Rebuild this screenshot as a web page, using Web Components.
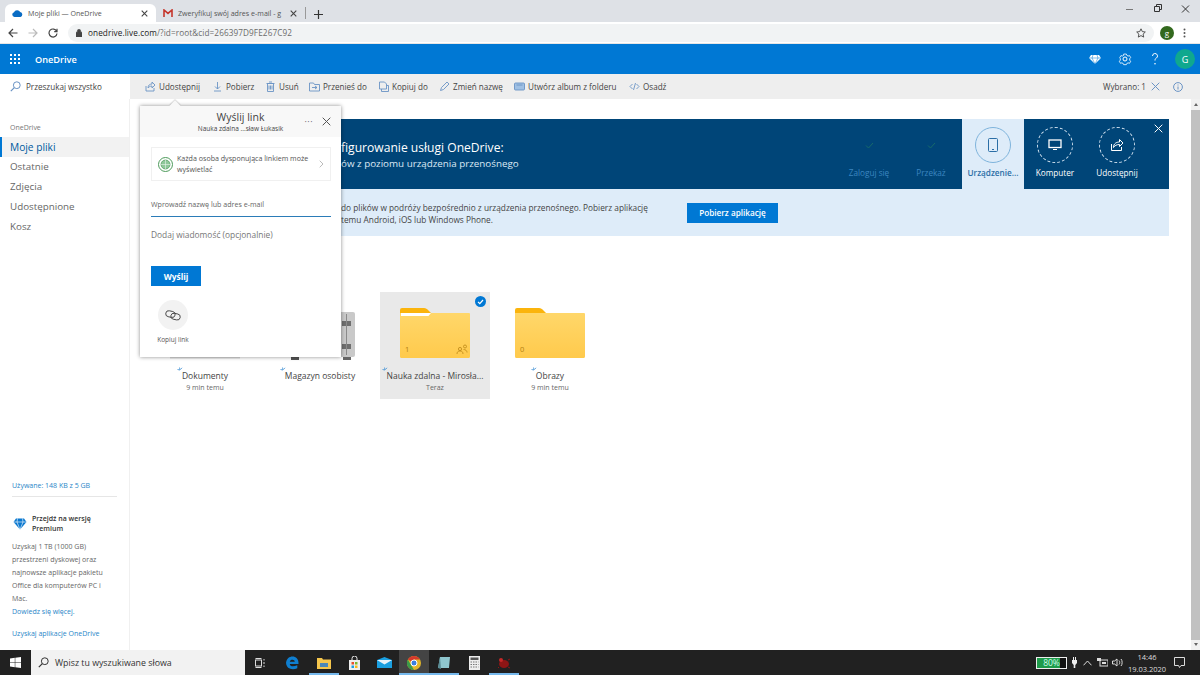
<!DOCTYPE html>
<html lang="pl">
<head>
<meta charset="utf-8">
<title>Moje pliki — OneDrive</title>
<style>
    html, body { margin: 0; height: 100%; overflow: hidden; }
    body {
        width: 1200px;
        height: 675px;
        display: flex;
        flex-direction: column;
        font-family: "Open Sans", "Noto Sans", sans-serif;
        color: #333;
        background: #fff;
    }
</style>
</head>
<body>
<browser-chrome></browser-chrome>
<od-header></od-header>
<od-commandbar></od-commandbar>
<od-main>
    <od-sidebar slot="side"></od-sidebar>
    <od-banner></od-banner>
    <div style="display:flex;gap:5px;margin:56px 0 0 20px">
        <folder-tile kind="doc" name="Dokumenty" time="9 min temu"></folder-tile>
        <folder-tile kind="vault" name="Magazyn osobisty"></folder-tile>
        <folder-tile kind="folder" name="Nauka zdalna - Mirosła..." time="Teraz" count="1" selected shared></folder-tile>
        <folder-tile kind="folder" name="Obrazy" time="9 min temu" count="0"></folder-tile>
    </div>
    <share-popup slot="over"></share-popup>
</od-main>
<win-taskbar></win-taskbar>

<script>
class BrowserChrome extends HTMLElement {
    constructor() {
        super()
        this.shadow = this.attachShadow({ mode: 'open' })
    }
    connectedCallback() {
        this.shadow.innerHTML = /*html*/`
        <style>
            :host { display: block; flex: none; font-family: "Open Sans", sans-serif; }
            .tabs { height: 22px; background: #dee1e6; display: flex; align-items: flex-end; padding-left: 5px; }
            .tab { height: 18px; display: flex; align-items: center; font-size: 7.1px; color: #555; box-sizing: border-box; }
            .tab.on { width: 151px; background: #fff; border-radius: 6px 6px 0 0; padding: 0 0 0 7px; }
            .tab.off { width: 149px; padding: 0 0 0 7px; }
            .tab svg.fav { margin-right: 5px; flex: none; }
            .tab span { flex: 1; white-space: nowrap; }
            .x { flex: none; margin: 0 8px 0 5px; }
            .sep { width: 1px; height: 12px; background: #999; margin: 0 0 3px 0; }
            .plus { margin: 0 0 3px 8px; }
            .winbtns { margin-left: auto; align-self: flex-start; display: flex; gap: 0; }
            .winbtns svg { width: 28px; height: 18px; }
            .bar { height: 22px; background: #fff; display: flex; align-items: center; box-sizing: border-box; border-bottom: 1px solid #e6e6e6; }
            .nav { display: flex; gap: 10px; padding-left: 8px; width: 68px; flex: none; box-sizing: border-box; }
            .omni { width: 1086px; height: 18px; background: #f1f3f4; border-radius: 9px; display: flex; align-items: center; font-size: 8.2px; color: #6b6b6b; letter-spacing: .1px; }
            .omni svg.lock { margin: 0 6px 0 8px; }
            .omni b { font-weight: 400; color: #222; }
            .omni .star { margin-left: auto; margin-right: 8px; }
            .avatar { width: 14px; height: 14px; border-radius: 50%; background: #33691e; color: #fff; font-size: 8px; display: flex; align-items: center; justify-content: center; margin-left: 6px; }
            .dots { margin-left: 9px; }
        </style>
        <div class="tabs">
            <div class="tab on">
                <svg class="fav" width="11" height="8" viewBox="0 0 11 8"><path d="M2.5 8A2.4 2.4 0 0 1 2 3.3 3.4 3.4 0 0 1 8.2 3 2.6 2.6 0 0 1 8.6 8z" fill="#0a6cc4"/></svg>
                <span>Moje pliki — OneDrive</span>
                <svg class="x" width="7" height="7" viewBox="0 0 7 7"><path d="M.7.7l5.6 5.6M6.3.7L.7 6.3" stroke="#444" stroke-width="1.1"/></svg>
            </div>
            <div class="tab off">
                <svg class="fav" width="10" height="8" viewBox="0 0 10 8"><path d="M1 8V1l4 3.4L9 1v7" fill="none" stroke="#c5362c" stroke-width="1.6"/></svg>
                <span>Zweryfikuj swój adres e-mail - g</span>
                <svg class="x" width="7" height="7" viewBox="0 0 7 7"><path d="M.7.7l5.6 5.6M6.3.7L.7 6.3" stroke="#444" stroke-width="1.1"/></svg>
            </div>
            <div class="sep"></div>
            <svg class="plus" width="9" height="9" viewBox="0 0 9 9"><path d="M4.5 0v9M0 4.5h9" stroke="#333" stroke-width="1.2"/></svg>
            <div class="winbtns">
                <svg viewBox="0 0 28 18"><path d="M10 9.5h7" stroke="#777" stroke-width="1"/></svg>
                <svg viewBox="0 0 28 18"><path d="M10.5 6.5h5v5h-5zM12.5 6.5v-2h5v5h-2" fill="none" stroke="#333"/></svg>
                <svg viewBox="0 0 28 18"><path d="M10 5.5l7 7M17 5.5l-7 7" stroke="#333"/></svg>
            </div>
        </div>
        <div class="bar">
            <div class="nav">
                <svg width="10" height="10" viewBox="0 0 10 10"><path d="M9.5 5H1M5 1L1 5l4 4" fill="none" stroke="#444" stroke-width="1.2"/></svg>
                <svg width="10" height="10" viewBox="0 0 10 10"><path d="M.5 5H9M5 1l4 4-4 4" fill="none" stroke="#bbb" stroke-width="1.2"/></svg>
                <svg width="10" height="10" viewBox="0 0 10 10"><path d="M8.6 3.2A4 4 0 1 0 9 5.5M9 .8v2.8H6.2" fill="none" stroke="#444" stroke-width="1.2"/></svg>
            </div>
            <div class="omni">
                <svg class="lock" width="6" height="8" viewBox="0 0 6 8"><path d="M0 3.2h6V8H0zM1.3 3.2V2a1.7 1.7 0 0 1 3.4 0v1.2" fill="#444" stroke="#444" stroke-width=".5"/></svg>
                <b>onedrive.live.com</b>/?id=root&amp;cid=266397D9FE267C92
                <svg class="star" width="10" height="10" viewBox="0 0 10 10"><path d="M5 .8l1.3 2.8 3 .4-2.2 2.1.6 3L5 7.6 2.3 9.1l.6-3L.7 4l3-.4z" fill="none" stroke="#444" stroke-width=".9"/></svg>
            </div>
            <div class="avatar">g</div>
            <svg class="dots" width="3" height="10" viewBox="0 0 3 10"><circle cx="1.5" cy="1.5" r="1" fill="#555"/><circle cx="1.5" cy="5" r="1" fill="#555"/><circle cx="1.5" cy="8.5" r="1" fill="#555"/></svg>
        </div>
        `
    }
}

class OdHeader extends HTMLElement {
    constructor() {
        super()
        this.shadow = this.attachShadow({ mode: 'open' })
    }
    connectedCallback() {
        this.shadow.innerHTML = /*html*/`
        <style>
            :host { display: flex; flex: none; height: 30px; background: #0078d4; align-items: center; color: #fff; font-family: "Open Sans", sans-serif; }
            .waffle { width: 35px; flex: none; display: flex; justify-content: center; padding-right: 5px; box-sizing: border-box; }
            .title { font-size: 9.2px; font-weight: 600; }
            .right { margin-left: auto; display: flex; align-items: center; }
            .right svg { width: 30px; height: 14px; }
            .avatar { width: 20px; height: 20px; border-radius: 50%; background: #0fa88e; font-size: 9px; display: flex; align-items: center; justify-content: center; margin: 0 5px 0 5px; }
        </style>
        <div class="waffle">
            <svg width="10" height="10" viewBox="0 0 10 10" fill="#fff">
                <rect width="2" height="2"/><rect x="4" width="2" height="2"/><rect x="8" width="2" height="2"/>
                <rect y="4" width="2" height="2"/><rect x="4" y="4" width="2" height="2"/><rect x="8" y="4" width="2" height="2"/>
                <rect y="8" width="2" height="2"/><rect x="4" y="8" width="2" height="2"/><rect x="8" y="8" width="2" height="2"/>
            </svg>
        </div>
        <div class="title">OneDrive</div>
        <div class="right">
            <svg viewBox="0 0 30 14"><path d="M11 3h8l2 3-6 6-6-6z" fill="#fff"/><path d="M9 6h12M13 3l-1 3 3 6 3-6-1-3" stroke="#0078d4" stroke-width=".5" fill="none"/></svg>
            <svg viewBox="0 0 30 14"><circle cx="15" cy="7" r="2" fill="none" stroke="#fff"/><path d="M13.5 1.5h3l.5 1.5 1.500.7 1.500-.5 1.300 2.300-1.100 1.200v1.600l1.100 1.200-1.300 2.300-1.500-.5-1.500.7-.5 1.300h-3l-.5-1.300-1.500-.7-1.500.5-1.300-2.300 1.100-1.200V6.700L9.200 5.500l1.300-2.300 1.500.5 1.500-.7z" fill="none" stroke="#fff" stroke-width=".9" transform="translate(1.5 .7) scale(.9)"/></svg>
            <svg viewBox="0 0 30 14"><path d="M12.5 4a2.500 2.500 0 1 1 3.700 2.200c-.8.500-1.200 1-1.200 2.300" fill="none" stroke="#fff"/><circle cx="15" cy="11.800" r=".8" fill="#fff"/></svg>
            <div class="avatar">G</div>
        </div>
        `
    }
}

class OdCommandbar extends HTMLElement {
    constructor() {
        super()
        this.shadow = this.attachShadow({ mode: 'open' })
    }
    item(label, path, width) {
        return `<div class="cmd" style="width:${width}px"><svg width="11" height="11" viewBox="0 0 11 11" fill="none" stroke="#6a93c4" stroke-width=".9">${path}</svg>${label}</div>`
    }
    connectedCallback() {
        // widths = distance from one icon to the next
        const items = [
            ['Udostępnij', '<path d="M1 5v5h8V7M3 7c0-3 2-4 4-4V1l3 3-3 3V5C5 5 4 6 3 7z"/>', 67],
            ['Pobierz', '<path d="M5.5 1v7M3 5.5l2.500 2.500L8 5.500M2 10h7"/>', 53],
            ['Usuń', '<path d="M2.5 2.5h6v8h-6zM1.5 2.5h8M4 1h3M4 4.500v4M5.500 4.500v4M7 4.500v4"/>', 44],
            ['Przenieś do', '<path d="M.5 2h4l1 1.500h5v6.500H.5zM3 6.500h5M6 5l2 1.500L6 8"/>', 69],
            ['Kopiuj do', '<path d="M1.5 1h5l2 2v5h-7zM3.500 8v2.500h7v-6H8.500"/>', 61],
            ['Zmień nazwę', '<path d="M1.5 9.500l1-3L8 1l2 2-5.500 5.500z"/>', 75],
            ['Utwórz album z folderu', '<rect x=".5" y="2" width="10" height="7" rx="1" fill="#9fc0e4"/><path d="M2.5 4h6"/>', 115],
            ['Osadź', '<path d="M3.5 3L1 5.500 3.500 8M7.500 3L10 5.500 7.500 8M6.500 2l-2 7"/>', 40],
        ]
        this.shadow.innerHTML = /*html*/`
        <style>
            :host { display: flex; flex: none; height: 25px; background: #eee; font-family: "Open Sans", sans-serif; font-size: 8.1px; color: #444; }
            .search { width: 130px; flex: none; box-sizing: border-box; background: #fff; padding: 0 0 0 10px; display: flex; align-items: center; gap: 5px; }
            .cmds { display: flex; align-items: center; padding-left: 15px; }
            .cmd { display: flex; align-items: center; gap: 3px; white-space: nowrap; flex: none; }
            .right { margin-left: auto; display: flex; align-items: center; gap: 5px; padding-right: 17px; }
        </style>
        <div class="search">
            <svg width="11" height="11" viewBox="0 0 11 11" fill="none" stroke="#6a93c4"><circle cx="6.8" cy="4.200" r="3.400"/><path d="M4.3 6.600L.8 10.200" stroke-width="1.2"/></svg>
            Przeszukaj wszystko
        </div>
        <div class="cmds">${items.map(i => this.item(i[0], i[1], i[2])).join('')}</div>
        <div class="right">
            Wybrano: 1
            <svg width="9" height="9" viewBox="0 0 9 9" style="margin-right:8px"><path d="M.7.7l7.6 7.600M8.300.7L.7 8.300" stroke="#6a93c4"/></svg>
            <svg width="10" height="10" viewBox="0 0 10 10" fill="none" stroke="#6a93c4"><circle cx="5" cy="5" r="4.4"/><path d="M5 4.500v3M5 2.500v1"/></svg>
        </div>
        `
    }
}

class OdMain extends HTMLElement {
    constructor() {
        super()
        this.shadow = this.attachShadow({ mode: 'open' })
    }
    connectedCallback() {
        this.shadow.innerHTML = /*html*/`
        <style>
            :host { display: flex; flex: 1; min-height: 0; position: relative; background: #fff; }
            .content { flex: 1; min-width: 0; padding: 20px 0 0 0; }
            .scroll { width: 9px; flex: none; margin-left: 22px; background: #f1f1f1; display: flex; flex-direction: column; align-items: center; }
            .scroll i { display: block; width: 9px; height: 530px; margin: 4px 0 3px; background: #c1c1c1; }
            .scroll b { display: block; width: 0; height: 0; border-left: 2.5px solid transparent; border-right: 2.5px solid transparent; }
            .scroll b.up { margin-top: 4px; border-bottom: 3px solid #666; }
            .scroll b.down { border-top: 3px solid #666; }
        </style>
        <slot name="side"></slot>
        <div class="content"><slot></slot></div>
        <div class="scroll"><b class="up"></b><i></i><b class="down"></b></div>
        <slot name="over"></slot>
        `
    }
}

class OdSidebar extends HTMLElement {
    constructor() {
        super()
        this.shadow = this.attachShadow({ mode: 'open' })
    }
    connectedCallback() {
        this.shadow.innerHTML = /*html*/`
        <style>
            :host { display: flex; flex-direction: column; width: 130px; flex: none; box-sizing: border-box; border-right: 1px solid #f0f0f0; font-family: "Open Sans", sans-serif; color: #666; }
            .group { font-size: 7px; color: #777; padding: 24px 0 4px 10px; line-height: 10px; }
            nav { display: flex; flex-direction: column; }
            nav a { height: 20px; line-height: 20px; padding-left: 10px; font-size: 9.8px; color: #666; }
            nav a.on { background: #f2f2f2; color: #005a9e; box-shadow: inset 2px 0 0 #0078d4; font-size: 10.2px; }
            .foot { margin-top: auto; padding: 0 12px 10px 12px; font-size: 7px; line-height: 13px; }
            .quota { color: #2a86c8; padding-bottom: 4px; border-bottom: 1px solid #e6e6e6; }
            .prem { display: flex; gap: 5px; align-items: center; margin: 17px 0 6px; color: #333; font-weight: 600; line-height: 10px; }
            .link { color: #2a86c8; }
            p { margin: 0; color: #666; }
            .app { color: #2a86c8; margin-top: 9px; }
        </style>
        <div class="group">OneDrive</div>
        <nav>
            <a class="on">Moje pliki</a>
            <a>Ostatnie</a>
            <a>Zdjęcia</a>
            <a>Udostępnione</a>
            <a>Kosz</a>
        </nav>
        <div class="foot">
            <div class="quota">Używane: 148 KB z 5 GB</div>
            <div class="prem">
                <svg width="14" height="12" viewBox="0 0 14 12" style="flex:none;margin-left:1px"><path d="M3 .5h8L13.5 4 7 11.5.5 4z" fill="#0a78d0"/><path d="M.5 4h13M4.500.5L4 4l3 7.500L10 4 9.500.5" stroke="#fff" stroke-width=".6" fill="none"/></svg>
                <span>Przejdź na wersję Premium</span>
            </div>
            <p>Uzyskaj 1 TB (1000 GB) przestrzeni dyskowej oraz najnowsze aplikacje pakietu Office dla komputerów PC i Mac.</p>
            <div class="link">Dowiedz się więcej.</div>
            <div class="app">Uzyskaj aplikacje OneDrive</div>
        </div>
        `
    }
}

class OdBanner extends HTMLElement {
    constructor() {
        super()
        this.shadow = this.attachShadow({ mode: 'open' })
    }
    connectedCallback() {
        const check = '<svg width="9" height="7" viewBox="0 0 9 7"><path d="M1 3.5l2.500 2.500L8 1" fill="none" stroke="#176a6a"/></svg>'
        this.shadow.innerHTML = /*html*/`
        <style>
            :host { display: block; margin-left: 10px; width: 1029px; font-family: "Open Sans", sans-serif; position: relative; }
            .top { height: 70px; background: #004578; display: flex; color: #fff; }
            .intro { flex: 1; padding: 21px 0 0 201px; white-space: nowrap; }
            .intro h2 { font-size: 12.1px; font-weight: 400; margin: 0; line-height: 16px; }
            .intro div { font-size: 9.8px; line-height: 16px; color: #dce9f5; }
            .step { width: 62px; flex: none; display: flex; flex-direction: column; align-items: center; font-size: 8.2px; white-space: nowrap; }
            .ring { width: 36px; height: 36px; margin: 8px 0 4px; border-radius: 50%; display: flex; align-items: center; justify-content: center; box-sizing: border-box; }
            .done { color: #3c86c0; }
            .now { background: #deecf9; color: #2b6ea6; font-weight: 600; }
            .now .ring { border: 1px solid #7fb4dc; }
            .todo .ring { border: 1px dashed #cfe0ee; }
            .close { position: absolute; right: 6px; top: 5px; }
            .low { height: 47px; background: #deecf9; display: flex; align-items: center; font-size: 8.3px; line-height: 12px; color: #444; }
            .low .txt { box-sizing: border-box; padding: 2px 0 0 201px; width: 547px; white-space: nowrap; }
            button { margin: 0; width: 91px; height: 20px; padding: 0; border: 0; background: #0078d4; color: #fff; font: 600 8.2px "Open Sans", sans-serif; }
        </style>
        <div class="top">
            <div class="intro">
                <h2>figurowanie usługi OneDrive:</h2>
                <div>ów z poziomu urządzenia przenośnego</div>
            </div>
            <div class="step done"><div class="ring">${check}</div>Zaloguj się</div>
            <div class="step done"><div class="ring">${check}</div>Przekaż</div>
            <div class="step now"><div class="ring"><svg width="10" height="14" viewBox="0 0 10 14" fill="none" stroke="#2b6ea6"><rect x=".5" y=".5" width="9" height="13" rx="1"/><path d="M4 11.5h2"/></svg></div>Urządzenie...</div>
            <div class="step todo"><div class="ring"><svg width="14" height="12" viewBox="0 0 14 12" fill="none" stroke="#fff"><rect x="1" y="1" width="12" height="7.5" stroke-width="1.3"/><path d="M5 10.5h4"/></svg></div>Komputer</div>
            <div class="step todo"><div class="ring"><svg width="14" height="14" viewBox="0 0 14 14" fill="none" stroke="#fff"><path d="M1.5 6v6.500h10V9M3.500 9.500c0-4 3-5.500 6-5.500V1.500l3.500 3.500L9.500 8.500V6.500c-3 0-4.500 1-6 3z"/></svg></div>Udostępnij</div>
            <div style="width:21px;flex:none"></div>
            <svg class="close" width="9" height="9" viewBox="0 0 9 9"><path d="M.7.7l7.6 7.600M8.300.7L.7 8.300" stroke="#fff"/></svg>
        </div>
        <div class="low">
            <div class="txt">do plików w podróży bezpośrednio z urządzenia przenośnego. Pobierz aplikację<br>temu Android, iOS lub Windows Phone.</div>
            <button>Pobierz aplikację</button>
        </div>
        `
    }
}

class FolderTile extends HTMLElement {
    constructor() {
        super()
        this.shadow = this.attachShadow({ mode: 'open' })
    }
    art(kind) {
        const count = this.getAttribute('count')
        const shared = this.hasAttribute('shared')
        if (kind === 'vault') {
            return `<svg width="70" height="52" viewBox="0 0 70 52"><rect x="6" y="49" width="8" height="3" fill="#555"/><rect x="58" y="49" width="8" height="3" fill="#666"/><rect x="0" y="4" width="70" height="45" rx="2" fill="#c9c9c9"/><rect x="57" y="13" width="9" height="5" fill="#6f6f6f"/><rect x="57" y="36" width="9" height="5" fill="#6f6f6f"/><path d="M61.5 6v41" stroke="#8a8a8a" fill="none"/></svg>`
        }
        if (kind === 'doc') {
            return `<svg width="70" height="52" viewBox="0 0 70 52"><rect y="49" width="70" height="1.500" fill="#dcdcdc"/></svg>`
        }
        return `<div class="folder">
            <svg width="70" height="50" viewBox="0 0 70 50">
                <defs><linearGradient id="b" x1="0" y1="0" x2="0" y2="1"><stop offset="0" stop-color="#ffd76a"/><stop offset="1" stop-color="#ffca4c"/></linearGradient></defs>
                <path d="M2 0h22c2 0 3 1 4 2l4 4v6H0V2a2 2 0 0 1 2-2z" fill="#fbb40c"/>
                <path d="M0 5h69a1 1 0 0 1 1 1v42.500a1.500 1.500 0 0 1-1.500 1.500h-67A1.500 1.500 0 0 1 0 48.500z" fill="url(#b)"/>
                ${shared ? '<path d="M1 5h30l-2.500 3H1z" fill="#fff"/>' : ''}
                ${shared ? '<g fill="none" stroke="#b47f10" stroke-width=".7"><circle cx="60" cy="41" r="1.600"/><path d="M57 46c0-2 1-3 3-3s3 1 3 3"/><circle cx="65" cy="38.500" r="1.500"/><path d="M63.500 41.500c2 0 3.500 1 3.500 3"/></g>' : ''}
            </svg>
            <em>${count}</em>
        </div>`
    }
    connectedCallback() {
        const name = this.getAttribute('name')
        const time = this.getAttribute('time') || '&nbsp;'
        const kind = this.getAttribute('kind')
        const on = this.hasAttribute('selected')
        this.shadow.innerHTML = /*html*/`
        <style>
            :host { display: flex; flex-direction: column; align-items: center; width: 110px; height: 107px; position: relative; font-family: "Open Sans", sans-serif; ${on ? 'background:#e9e9e9;' : ''} }
            .art { margin-top: 16px; height: 52px; position: relative; }
            .folder { position: relative; height: 50px; }
            .art svg { display: block; }
            em { position: absolute; left: 5px; bottom: 4px; font-style: normal; font-size: 7.5px; color: #b47f10; }
            .name { margin-top: 9px; font-size: 8.5px; line-height: 14px; color: #444; white-space: nowrap; position: relative; }
            .name svg { position: absolute; left: -5px; top: -2px; }
            .time { font-size: 7px; line-height: 10px; color: #666; }
            .check { position: absolute; right: 4px; top: 4px; }
        </style>
        <div class="art">${this.art(kind)}</div>
        <div class="name"><svg width="6" height="6" viewBox="0 0 6 6" fill="none" stroke="#3d8fd4" stroke-width=".8"><path d="M2.5.5L3 3 .5 2.500M5 .8L3.500 2.500"/></svg>${name}</div>
        <div class="time">${time}</div>
        ${on ? '<svg class="check" width="11" height="11" viewBox="0 0 11 11"><circle cx="5.5" cy="5.5" r="5.5" fill="#0078d4"/><path d="M3 5.8l1.8 1.800L8 4" fill="none" stroke="#fff" stroke-width="1.2"/></svg>' : ''}
        `
    }
}

class SharePopup extends HTMLElement {
    constructor() {
        super()
        this.shadow = this.attachShadow({ mode: 'open' })
    }
    connectedCallback() {
        this.shadow.innerHTML = /*html*/`
        <style>
            :host { position: absolute; left: 140px; top: 7px; width: 201px; height: 251px; background: #fff; box-shadow: 0 0 4px rgba(0,0,0,.45); font-family: "Open Sans", sans-serif; display: flex; flex-direction: column; color: #666; }
            .beak { position: absolute; left: 31px; top: -4px; width: 8px; height: 8px; background: #f8f8f8; transform: rotate(45deg); box-shadow: -1px -1px 1px rgba(0,0,0,.15); }
            header { position: relative; height: 31px; background: #f8f8f8; text-align: center; flex: none; }
            h3 { margin: 0; padding-top: 5px; font-size: 10.5px; line-height: 13px; font-weight: 400; color: #444; }
            small { display: block; font-size: 6.5px; line-height: 9px; color: #444; }
            .more { position: absolute; right: 28px; top: 9px; font-size: 9px; letter-spacing: .5px; }
            .close { position: absolute; right: 10px; top: 11px; }
            .body { padding: 10px 10px 0 11px; display: flex; flex-direction: column; flex: 1; }
            .who { display: flex; align-items: center; height: 34px; border: 1px solid #f0f0f0; box-sizing: border-box; padding: 0 6px 0 6px; gap: 4px; font-size: 7.1px; line-height: 11px; color: #555; }
            .who span { flex: 1; }
            .to { margin-top: 17px; height: 18px; border-bottom: 1px solid #2b7cb8; font-size: 7.1px; line-height: 13px; color: #666; }
            .msg { margin-top: 12px; font-size: 8.4px; line-height: 12px; color: #777; }
            button { margin-top: 25px; width: 50px; height: 20px; padding: 0; border: 0; background: #0078d4; color: #fff; font: 700 8.4px "Open Sans", sans-serif; }
            .copy { width: 44px; margin: 14px 0 0 0; display: flex; flex-direction: column; align-items: center; font-size: 6.5px; color: #555; }
            .copy i { display: flex; align-items: center; justify-content: center; width: 30px; height: 30px; border-radius: 50%; background: #f2f2f2; margin-bottom: 5px; }
        </style>
        <div class="beak"></div>
        <header>
            <h3>Wyślij link</h3>
            <small>Nauka zdalna ...sław Łukasik</small>
            <div class="more">···</div>
            <svg class="close" width="9" height="9" viewBox="0 0 9 9"><path d="M.7.7l7.6 7.600M8.300.7L.7 8.300" stroke="#555"/></svg>
        </header>
        <div class="body">
            <div class="who">
                <svg width="15" height="15" viewBox="0 0 15 15" style="flex:none" fill="none" stroke="#4d9a5a"><circle cx="7.5" cy="7.5" r="7"/><circle cx="7.5" cy="7.5" r="4.5" fill="#8fc79a" stroke-width=".7"/><path d="M3 7.5h9M7.500 3v9" stroke="#eaf5ec" stroke-width=".6"/></svg>
                <span>Każda osoba dysponująca linkiem może wyświetlać</span>
                <svg width="5" height="8" viewBox="0 0 5 8" style="flex:none"><path d="M.7.7L4 4 .7 7.3" fill="none" stroke="#bbb"/></svg>
            </div>
            <div class="to">Wprowadź nazwę lub adres e-mail</div>
            <div class="msg">Dodaj wiadomość (opcjonalnie)</div>
            <button>Wyślij</button>
            <div class="copy">
                <i><svg width="16" height="11" viewBox="0 0 16 11" fill="none" stroke="#444" stroke-width=".9"><rect x=".7" y="1" width="9.5" height="6" rx="3" transform="rotate(12 5 4)"/><rect x="5.8" y="3.5" width="9.5" height="6" rx="3" transform="rotate(12 10 6.5)"/></svg></i>
                Kopiuj link
            </div>
        </div>
        `
    }
}

class WinTaskbar extends HTMLElement {
    constructor() {
        super()
        this.shadow = this.attachShadow({ mode: 'open' })
    }
    connectedCallback() {
        this.shadow.innerHTML = /*html*/`
        <style>
            :host { display: flex; flex: none; height: 25px; background: #212121; align-items: stretch; font-family: "Open Sans", sans-serif; color: #ddd; }
            .start { width: 31px; flex: none; display: flex; align-items: center; justify-content: center; }
            .search { width: 214px; flex: none; background: #f2f2f2; color: #333; display: flex; align-items: center; gap: 6px; padding-left: 7px; box-sizing: border-box; font-size: 8.8px; }
            .apps { display: flex; }
            .app { width: 30px; flex: none; display: flex; align-items: center; justify-content: center; box-sizing: border-box; }
            .app.wide { width: 34px; }
            .app.run { box-shadow: inset 0 -2px 0 #76b9ed; }
            .app.act { background: #444; box-shadow: inset 0 -2px 0 #76b9ed; }
            .tray { margin-left: auto; display: flex; align-items: center; }
            .bat { width: 29px; height: 10px; background: #111; border: 1px solid #eee; position: relative; font-size: 8.5px; line-height: 10px; color: #cfe; text-align: center; margin-right: 4px; }
            .bat i { position: absolute; left: 0; top: 0; bottom: 0; width: 80%; background: #1e9b4a; }
            .bat span { position: relative; }
            .clock { font-size: 7.5px; line-height: 12px; text-align: center; width: 44px; margin-left: 2px; }
            .note { margin: 0 15px 0 5px; }
        </style>
        <div class="start">
            <svg width="11" height="11" viewBox="0 0 11 11" fill="#fff"><path d="M0 1.500l4.800-.7v4.400H0zM5.300.7L11 0v5.200H5.300zM0 5.800h4.800v4.400L0 9.500zM5.300 5.800H11V11l-5.700-.8z"/></svg>
        </div>
        <div class="search">
            <svg width="11" height="11" viewBox="0 0 11 11" fill="none" stroke="#333"><circle cx="6.8" cy="4.2" r="3.4"/><path d="M4.3 6.600L.8 10.200" stroke-width="1.2"/></svg>
            Wpisz tu wyszukiwane słowa
        </div>
        <div class="apps">
            <div class="app"><svg width="11" height="10" viewBox="0 0 11 10" fill="none" stroke="#ddd"><rect x=".5" y="2" width="6" height="6"/><path d="M.5 .5h6M.5 9.500h6M9 1v1.500M9 4v2M9 7.500V9"/></svg></div>
            <div class="app wide"><svg width="14" height="14" viewBox="0 0 14 14"><path d="M1 7C1.500 2.500 4.500.5 7.500.5c3.500 0 6 2.500 6 6.500v1H4.800c.2 2.500 3.500 3 7.500 1.200v3c-4.500 2-11 1.300-11.300-5.700zM4.800 5.800h5c0-2.500-4.500-2.800-5 0z" fill="#0f7fd0"/></svg></div>
            <div class="app run"><svg width="14" height="12" viewBox="0 0 14 12"><path d="M0 1h5l1 1.500h8V12H0z" fill="#f5c64c"/><rect x="3" y="6" width="8" height="4" fill="#4b87b8"/></svg></div>
            <div class="app"><svg width="13" height="14" viewBox="0 0 13 14"><path d="M1 4h11v10H1z" fill="#eee"/><path d="M4 4V2.500a2.500 2.500 0 0 1 5 0V4" fill="none" stroke="#eee"/><rect x="3.5" y="6" width="2.5" height="2.5" fill="#e8502a"/><rect x="7" y="6" width="2.5" height="2.5" fill="#7cb82f"/><rect x="3.5" y="9.5" width="2.5" height="2.5" fill="#1ba0e2"/><rect x="7" y="9.5" width="2.5" height="2.5" fill="#f9b916"/></svg></div>
            <div class="app"><svg width="15" height="11" viewBox="0 0 15 11"><path d="M0 3l7.500-3L15 3v8H0z" fill="#1a9fe0"/><path d="M0 3l7.500 4.500L15 3" fill="#e8f4fb"/></svg></div>
            <div class="app act"><svg width="14" height="14" viewBox="0 0 14 14"><circle cx="7" cy="7" r="7" fill="#e2b62a"/><path d="M7 7L.9 3.500A7 7 0 0 1 13 3.500H7z" fill="#d6392c"/><path d="M7 14A7 7 0 0 1 .9 3.500L4 9z" fill="#3a9b49"/><circle cx="7" cy="7" r="3" fill="#3a7fe0" stroke="#fff"/></svg></div>
            <div class="app run"><svg width="14" height="14" viewBox="0 0 14 14"><path d="M3 1h10l-1 11H1z" fill="#8fc7cf"/><path d="M3 1L1 12l3 1z" fill="#5a8d96"/></svg></div>
            <div class="app"><svg width="11" height="14" viewBox="0 0 11 14"><rect width="11" height="14" fill="#eee"/><rect x="1.5" y="1.5" width="8" height="2.5" fill="#555"/><path d="M1.5 6h8M1.500 8.500h8M1.500 11h8" stroke="#777" stroke-dasharray="1.5 1"/></svg></div>
            <div class="app run"><svg width="14" height="12" viewBox="0 0 14 12"><ellipse cx="7" cy="7" rx="5" ry="4" fill="#8e1515"/><circle cx="4" cy="3" r="2" fill="#c62828"/><path d="M11 3l2-1M11 10l2 1M2 10l-1 1" stroke="#8e1515"/></svg></div>
        </div>
        <div class="tray">
            <div class="bat"><i></i><span>80%</span></div>
            <svg width="7" height="11" viewBox="0 0 7 11" fill="#eee"><path d="M1 3h5v3L4.300 8v3H2.700V8L1 6zM2 0h1v3H2zM4 0h1v3H4z"/></svg>
            <svg width="9" height="6" viewBox="0 0 9 6" style="margin-left:5px"><path d="M.5 5.300L4.500 1l4 4.300" fill="none" stroke="#ddd"/></svg>
            <svg width="11" height="9" viewBox="0 0 11 9" style="margin-left:5px" fill="#ddd"><rect x="3" y="2" width="8" height="6" fill="none" stroke="#ddd"/><rect x="0" y="0" width="4" height="3"/><rect x="5" y="4" width="4" height="2"/></svg>
            <svg width="11" height="9" viewBox="0 0 11 9" style="margin-left:4px" fill="none" stroke="#ddd"><path d="M.5 3h2L5 1v7L2.500 6h-2zM7 2.500c1 1 1 3 0 4M9 1c1.500 1.500 1.500 5.500 0 7"/></svg>
            <div class="clock">14:46<br>19.03.2020</div>
            <svg class="note" width="11" height="11" viewBox="0 0 11 11" fill="none" stroke="#ddd"><path d="M.5.5h10v8H7L5.500 10.500 4.500 8.500h-4z"/></svg>
        </div>
        `
    }
}

customElements.define('browser-chrome', BrowserChrome)
customElements.define('od-header', OdHeader)
customElements.define('od-commandbar', OdCommandbar)
customElements.define('od-main', OdMain)
customElements.define('od-sidebar', OdSidebar)
customElements.define('od-banner', OdBanner)
customElements.define('folder-tile', FolderTile)
customElements.define('share-popup', SharePopup)
customElements.define('win-taskbar', WinTaskbar)
</script>
</body>
</html>
